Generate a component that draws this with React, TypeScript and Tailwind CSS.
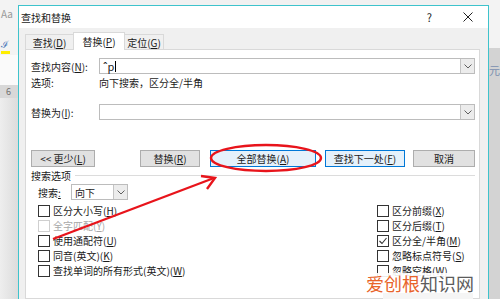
import React from "react";

const FONT = "font-['Noto_Sans_CJK_SC','Noto_Sans',sans-serif]";

function Key({ k }: { k: string }) {
  return (
    <span>
      (<span className="underline underline-offset-1">{k}</span>)
    </span>
  );
}

function Chevron() {
  return (
    <svg width="8" height="5" viewBox="0 0 8 5">
      <path d="M0.5 0.5 L4 4 L7.5 0.5" stroke="#606060" fill="none" strokeWidth="1" />
    </svg>
  );
}

function DropBtn() {
  return (
    <span className="flex h-full w-[14px] items-center justify-center border-l border-[#c4c4c4] bg-[#ececec]">
      <Chevron />
    </span>
  );
}

function Check({
  label,
  k,
  checked,
  disabled,
}: {
  label: string;
  k: string;
  checked?: boolean;
  disabled?: boolean;
}) {
  return (
    <div className="flex h-[15px] items-center">
      <span
        className={`flex h-[12px] w-[12px] shrink-0 items-center justify-center border bg-white ${
          disabled ? "border-[#cfcfcf]" : "border-[#333333]"
        }`}
      >
        {checked && (
          <svg width="10" height="10" viewBox="0 0 10 10">
            <path d="M1.5 5 L4 7.5 L8.5 2" stroke="#333" strokeWidth="1.1" fill="none" />
          </svg>
        )}
      </span>
      <span className={`ml-[3px] ${disabled ? "text-[#a8a8a8]" : "text-[#1a1a1a]"}`}>
        {label}
        <Key k={k} />
      </span>
    </div>
  );
}

function Btn({
  w,
  children,
  active,
}: {
  w: string;
  children: React.ReactNode;
  active?: boolean;
}) {
  return (
    <div
      className={`flex h-[17px] items-center justify-center border ${w} ${
        active ? "border-[#0078d7] bg-[#e5f1fb]" : "border-[#adadad] bg-[#e1e1e1]"
      }`}
    >
      {children}
    </div>
  );
}

export default function App() {
  return (
    <div
      className={`relative flex h-[299px] w-[500px] overflow-hidden whitespace-nowrap bg-[#ececec] text-[10px] leading-[15px] text-[#1a1a1a] ${FONT}`}
    >
      {/* Word window behind, left strip */}
      <div className="flex w-[20px] flex-col">
        <div className="h-[55px] bg-[#f3f3f3] pl-[1px] pt-[8px] text-[10px] leading-[12px] text-[#9a9a9a]">
          <div>Aa</div>
          <div className="mt-[18px] text-[#3c6fb5]">ℐ</div>
          <div className="mt-[1px] h-[3px] w-[9px] bg-[#ffee00]" />
        </div>
        <div className="h-[30px] bg-[#fafafa]" />
        <div className="h-[13px] bg-[#d8d8d8] pl-[6px] text-[9px] leading-[13px] text-[#707070]">6</div>
        <div className="flex-1 bg-gradient-to-r from-[#eeeeee] to-[#dcdcdc]" />
      </div>

      {/* Dialog column */}
      <div className="flex w-[471px] flex-col">
        <div className="h-[5px] bg-[#f1f1f1]" />
        <div className="flex flex-1 flex-col border-l border-r border-t border-[#3ec3cc] bg-[#f0f0f0]">
          {/* Title bar */}
          <div className="flex h-[22px] items-center bg-white pl-[2px]">
            <span>查找和替换</span>
            <span className="ml-auto mr-[31px] text-[11px] text-[#222]">?</span>
            <span className="mr-[15px]">
              <svg width="10" height="10" viewBox="0 0 10 10">
                <path d="M0.5 0.5 L9.5 9.5 M9.5 0.5 L0.5 9.5" stroke="#222" strokeWidth="1" />
              </svg>
            </span>
          </div>

          {/* Body */}
          <div className="flex flex-1 flex-col pl-[6px] pr-[8px] pt-[4px]">
            {/* Tabs */}
            <div className="relative z-10 -mb-[1px] flex items-end">
              <div className="flex h-[16px] w-[48px] items-center justify-center border-l border-t border-[#d9d9d9]">
                查找<Key k="D" />
              </div>
              <div className="flex h-[18px] w-[52px] items-center justify-center border-l border-r border-t border-[#d9d9d9] bg-white">
                替换<Key k="P" />
              </div>
              <div className="flex h-[16px] w-[39px] items-center justify-center border-r border-t border-[#d9d9d9]">
                定位<Key k="G" />
              </div>
            </div>

            {/* Panel */}
            <div className="flex flex-1 flex-col border border-[#d9d9d9] bg-white pl-[5px] pr-[4px] pt-[8px]">
              <div className="flex h-[16px] items-center">
                <span className="w-[68px]">
                  查找内容<Key k="N" />:
                </span>
                <div className="flex h-[16px] flex-1 items-center border border-[#bcbcbc]">
                  <span className="flex flex-1 items-center pl-[3px] text-[11px]">
                    <span className="text-[#222]">ˆp</span>
                    <span className="ml-[1px] h-[11px] w-[1px] bg-black" />
                  </span>
                  <DropBtn />
                </div>
              </div>
              <div className="flex h-[16px] items-center">
                <span className="w-[68px]">选项:</span>
                <span>向下搜索，区分全/半角</span>
              </div>

              <div className="mt-[14px] flex h-[16px] items-center">
                <span className="w-[68px]">
                  替换为<Key k="I" />:
                </span>
                <div className="flex h-[16px] flex-1 items-center border border-[#bcbcbc]">
                  <span className="flex-1" />
                  <DropBtn />
                </div>
              </div>

              {/* Buttons */}
              <div className="mt-[30px] flex items-center">
                <Btn w="w-[64px]">
                  &lt;&lt; 更少<Key k="L" />
                </Btn>
                <div className="ml-[45px]">
                  <Btn w="w-[60px]">
                    替换<Key k="R" />
                  </Btn>
                </div>
                <div className="ml-[10px]">
                  <Btn w="w-[106px]" active>
                    全部替换<Key k="A" />
                  </Btn>
                </div>
                <div className="ml-[9px]">
                  <Btn w="w-[80px]" active>
                    查找下一处<Key k="F" />
                  </Btn>
                </div>
                <div className="ml-[8px]">
                  <Btn w="w-[62px]">取消</Btn>
                </div>
              </div>

              {/* Search options header */}
              <div className="flex h-[17px] items-center">
                <span>搜索选项</span>
                <span className="ml-[4px] h-[1px] flex-1 bg-[#dcdcdc]" />
              </div>

              {/* Options */}
              <div className="flex">
                <div className="ml-[7px] flex flex-1 flex-col">
                  <div className="flex h-[16px] items-center">
                    <span className="w-[33px]">
                      搜索<span className="underline underline-offset-1">:</span>
                    </span>
                    <div className="flex h-[16px] w-[57px] items-center border border-[#bcbcbc] bg-white">
                      <span className="flex-1 pl-[3px]">向下</span>
                      <DropBtn />
                    </div>
                  </div>
                  <div className="mt-[3px] flex flex-col">
                    <Check label="区分大小写" k="H" />
                    <Check label="全字匹配" k="Y" disabled />
                    <Check label="使用通配符" k="U" />
                    <Check label="同音(英文)" k="K" />
                    <Check label="查找单词的所有形式(英文)" k="W" />
                  </div>
                </div>
                <div className="flex w-[98px] flex-col pt-[19px]">
                  <Check label="区分前缀" k="X" />
                  <Check label="区分后缀" k="T" />
                  <Check label="区分全/半角" k="M" checked />
                  <Check label="忽略标点符号" k="S" />
                  <Check label="忽略空格" k="W" />
                </div>
              </div>
            </div>
          </div>
        </div>
      </div>

      {/* Word window behind, right strip */}
      <div className="flex flex-1 flex-col">
        <div className="h-[48px] bg-[#f3f3f3]" />
        <div className="flex-1 bg-[#d3d3d3] pt-[16px] text-[11px] leading-[12px] text-[#7a8fb0]">元</div>
      </div>

      {/* Red annotations */}
      <svg className="pointer-events-none absolute left-0 top-0" width="500" height="299" viewBox="0 0 500 299">
        <ellipse cx="266" cy="158" rx="55" ry="13" stroke="#e8141b" strokeWidth="2.4" fill="none" />
        <line x1="53" y1="239" x2="214" y2="178" stroke="#e8141b" strokeWidth="2.4" />
        <polyline points="201,176 215,178 207,189" stroke="#e8141b" strokeWidth="2.4" fill="none" />
      </svg>

      {/* Watermark */}
      <div className="pointer-events-none absolute left-[360px] top-[273px] flex flex-col">
        <div className="bg-white/90 pl-[6px] pr-[4px] text-[18px] leading-[20px]">
          <span className="text-[#e8632a]">爱创根</span>
          <span className="text-[#5c5c5c]">知识网</span>
        </div>
        <div className="ml-[23px] h-[8px] w-[90px] bg-[#f5f5f5]" />
      </div>
    </div>
  );
}
